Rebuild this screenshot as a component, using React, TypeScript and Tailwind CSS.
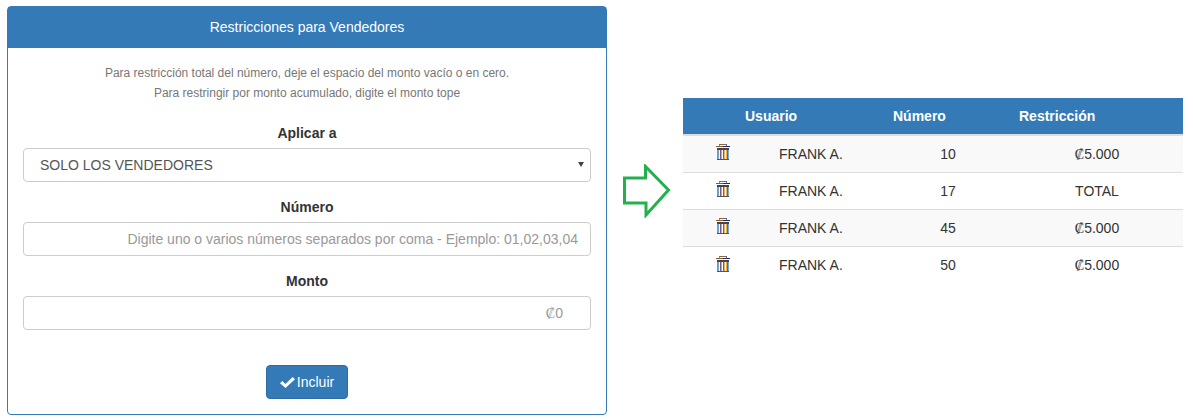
type Row = { numero: string; monto: boolean; restriccion: string };

const rows: Row[] = [
  { numero: "10", monto: true, restriccion: "5.000" },
  { numero: "17", monto: false, restriccion: "TOTAL" },
  { numero: "45", monto: true, restriccion: "5.000" },
  { numero: "50", monto: true, restriccion: "5.000" },
];

function Colon() {
  return <span className="font-['Liberation_Serif',serif]">₡</span>;
}

function TrashIcon() {
  return (
    <svg width="14" height="16" viewBox="0 0 14 16" shapeRendering="crispEdges" className="block">
      {/* handle */}
      <rect x="3" y="0" width="8" height="1" fill="#7d6a58" />
      <rect x="3" y="1" width="1" height="1" fill="#b98a55" />
      <rect x="10" y="1" width="1" height="1" fill="#5f7fa3" />
      {/* lid */}
      <rect x="0" y="2" width="7" height="1" fill="#8a5a24" />
      <rect x="7" y="2" width="7" height="1" fill="#26286e" />
      {/* body */}
      <rect x="1" y="4" width="12" height="2" fill="#444444" />
      <rect x="1" y="6" width="1" height="9" fill="#c08a4a" />
      <rect x="2" y="6" width="1" height="9" fill="#6fa3cc" />
      <rect x="4" y="6" width="1" height="9" fill="#7a5a80" />
      <rect x="5" y="6" width="1" height="9" fill="#86b8dc" />
      <rect x="7" y="6" width="1" height="9" fill="#a85050" />
      <rect x="8" y="6" width="1" height="9" fill="#e2b064" />
      <rect x="10" y="6" width="1" height="9" fill="#e8ae5e" />
      <rect x="11" y="6" width="1" height="9" fill="#4a6a98" />
      <rect x="12" y="6" width="1" height="9" fill="#6fb0d8" />
      <rect x="1" y="15" width="12" height="1" fill="#555555" />
    </svg>
  );
}

function Arrow() {
  return (
    <svg width="48" height="54" viewBox="0 0 48 54" className="block">
      <path d="M1.5 14 H22.5 V2.5 L45.5 26 L23 51 V39 H1.5 Z" fill="none" stroke="#22b14c" strokeWidth="3" />
    </svg>
  );
}

function CheckIcon() {
  return (
    <svg width="15" height="11" viewBox="0 0 15 11" className="block">
      <path d="M0 6.2 L2.3 3.9 L5.5 7 L12.6 0 L15 2.3 L5.5 11 Z" fill="#ffffff" />
    </svg>
  );
}

export default function App() {
  return (
    <div className="flex w-[1193px] h-[420px] items-start pl-[7px] pt-[6px] bg-white text-[14px] text-[#333333] font-['Liberation_Sans',Arial,sans-serif]">
      {/* Form panel */}
      <div className="w-[600px] h-[409px] shrink-0 flex flex-col rounded-[4px] border border-[#337ab7]">
        <div className="h-[41px] shrink-0 flex items-center justify-center bg-[#337ab7] text-white">
          Restricciones para Vendedores
        </div>
        <div className="px-[15px] pt-[15px] flex flex-col items-center">
          <p className="text-[12px] leading-[20px] text-[#777777] text-center">
            Para restricción total del número, deje el espacio del monto vacío o en cero.
            <br />
            Para restringir por monto acumulado, digite el monto tope
          </p>
          <label className="mt-[20px] font-bold leading-[20px]">Aplicar a</label>
          <div className="relative mt-[5px] w-[568px] h-[34px] flex items-center pl-[16px] rounded-[4px] border border-[#cccccc] text-[#555555]">
            SOLO LOS VENDEDORES
            <svg width="6" height="5" viewBox="0 0 6 5" className="absolute right-[6px] top-[13px]">
              <path d="M0 0 H6 L3 5 Z" fill="#444444" />
            </svg>
          </div>
          <label className="mt-[15px] font-bold leading-[20px]">Número</label>
          <div className="mt-[5px] w-[568px] h-[34px] flex items-center justify-end pr-[12px] rounded-[4px] border border-[#cccccc] text-[#999999]">
            Digite uno o varios números separados por coma - Ejemplo: 01,02,03,04
          </div>
          <label className="mt-[15px] font-bold leading-[20px]">Monto</label>
          <div className="mt-[5px] w-[568px] h-[34px] flex items-center justify-end pr-[27px] rounded-[4px] border border-[#cccccc] text-[#999999]">
            <Colon />0
          </div>
          <button className="mt-[35px] w-[82px] h-[34px] flex items-center justify-center gap-[2px] rounded-[4px] border border-[#2e6da4] bg-[#337ab7] text-white">
            <CheckIcon />
            Incluir
          </button>
        </div>
      </div>

      {/* Arrow */}
      <div className="ml-[16px] mt-[158px] w-[60px] shrink-0">
        <Arrow />
      </div>

      {/* Table */}
      <div className="mt-[92px] w-[500px] shrink-0">
        <div className="h-[38px] flex items-center pl-[62px] bg-[#337ab7] border-b-2 border-[#dddddd] font-bold text-white">
          <span className="w-[148px]">Usuario</span>
          <span className="w-[126px]">Número</span>
          <span>Restricción</span>
        </div>
        {rows.map((row, i) => (
          <div
            key={row.numero}
            className={`h-[37px] grid grid-cols-[96px_104px_130px_168px] items-center border-b border-[#dddddd] last:border-b-0 ${
              i % 2 === 0 ? "bg-[#f9f9f9]" : "bg-white"
            }`}
          >
            <div className="pl-[33px] pb-[4px]">
              <TrashIcon />
            </div>
            <span>FRANK A.</span>
            <span className="text-center">{row.numero}</span>
            <span className="text-center">
              {row.monto && <Colon />}
              {row.restriccion}
            </span>
          </div>
        ))}
      </div>
    </div>
  );
}
